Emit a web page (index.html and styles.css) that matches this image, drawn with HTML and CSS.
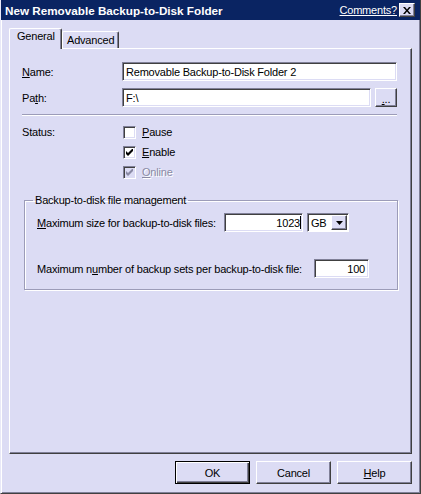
FILE: index.html
```html
<!doctype html>
<html>

<head>
    <meta charset="utf-8" />
    <link rel="stylesheet" href="styles.css">
</head>

<body>

    <div class="window">

        <div class="titlebar">
            <div class="title">New Removable Backup-to-Disk Folder</div>
            <span class="comments">Comments?</span>
            <span class="close">
                <svg width="8" height="7" viewBox="0 0 8 7">
                    <path d="M0 0h2l2 2.5 2-2.5h2l-3 3.5 3 3.5h-2l-2-2.5-2 2.5h-2l3-3.5z" fill="#000" />
                </svg>
            </span>
        </div>

        <div class="tabs">
            <div class="tab active">General</div>
            <div class="tab">Advanced</div>
        </div>

        <div class="panel">

            <div class="row">
                <div class="label"><u>N</u>ame:</div>
                <div class="field wide">Removable Backup-to-Disk Folder 2</div>
            </div>
            <div class="row">
                <div class="label">Pa<u>t</u>h:</div>
                <div class="field path">F:\</div>
                <div class="btn small"><u>.</u>..</div>
            </div>

            <div class="separator"></div>

            <div class="status">
                <div class="label">Status:</div>
                <div class="checks">
                    <div class="check-row">
                        <span class="box"></span>
                        <span><u>P</u>ause</span>
                    </div>
                    <div class="check-row">
                        <span class="box">
                            <svg width="7" height="7" viewBox="0 0 7 7">
                                <path d="M0 2v3l2 2 5-5v-3l-5 5z" fill="#000" />
                            </svg>
                        </span>
                        <span><u>E</u>nable</span>
                    </div>
                    <div class="check-row disabled">
                        <span class="box">
                            <svg width="7" height="7" viewBox="0 0 7 7">
                                <path d="M0 2v3l2 2 5-5v-3l-5 5z" fill="#8a8aa4" />
                            </svg>
                        </span>
                        <span><u>O</u>nline</span>
                    </div>
                </div>
            </div>

            <fieldset class="group">
                <legend>Backup-to-disk file management</legend>
                <div class="group-row">
                    <div class="glabel size-label"><u>M</u>aximum size for backup-to-disk files:</div>
                    <div class="field num size">1023<span class="caret"></span></div>
                    <div class="combo">
                        <span class="combo-text">GB</span>
                        <span class="combo-btn">
                            <svg width="7" height="4" viewBox="0 0 7 4">
                                <path d="M0 0h7l-3.5 4z" fill="#000" />
                            </svg>
                        </span>
                    </div>
                </div>
                <div class="group-row second">
                    <div class="glabel count-label">Maximum n<u>u</u>mber of backup sets per backup-to-disk file:</div>
                    <div class="field num count">100</div>
                </div>
            </fieldset>

        </div>

        <div class="buttons">
            <div class="btn default">OK</div>
            <div class="btn">Cancel</div>
            <div class="btn"><u>H</u>elp</div>
        </div>

    </div>

</body>

</html>
```

FILE: styles.css
```css
html,
body {
    margin: 0 0;
    font-family: "Liberation Sans", Arial, sans-serif;
    font-size: 11px;
    letter-spacing: -0.2px;
    color: #000;
}

.window {
    width: 421px;
    height: 494px;
    box-sizing: border-box;
    display: flex;
    flex-direction: column;
    background-color: #dcdcf4;
    border-left: 1px solid #e8e8f8;
    border-right: 1px solid #404040;
    border-bottom: 1px solid #404040;
    box-shadow: inset 1px 0 #ffffff, inset -1px -1px #808098;
}

.titlebar {
    height: 20px;
    display: flex;
    flex-direction: row;
    align-items: center;
    background-color: #0a2462;
    color: white;
    padding-left: 4px;
    padding-right: 5px;
}

.titlebar .title {
    flex-grow: 1;
    font-weight: bold;
    font-size: 11.7px;
    letter-spacing: 0;
}

.titlebar .comments {
    text-decoration: underline;
    margin-right: 2px;
}

.titlebar .close {
    width: 14px;
    height: 12px;
    display: flex;
    align-items: center;
    justify-content: center;
    background-color: #dcdcf4;
    border: 1px solid;
    border-color: #ffffff #404040 #404040 #ffffff;
    box-shadow: inset -1px -1px #808098;
}

.tabs {
    display: flex;
    flex-direction: row;
    align-items: flex-end;
    height: 21px;
    margin-top: 7px;
    padding-left: 8px;
    position: relative;
    z-index: 1;
}

.tab {
    height: 16px;
    padding: 0 4px;
    display: flex;
    align-items: center;
    border: 1px solid;
    border-bottom: none;
    border-color: #ffffff #404040 #404040 #ffffff;
    box-shadow: inset -1px 0 #808098;
    border-top-left-radius: 2px;
    border-top-right-radius: 2px;
}

.tab.active {
    padding: 1px 7px 0 7px;
    margin-bottom: -1px;
    background-color: #dcdcf4;
    align-items: flex-start;
    box-sizing: border-box;
    height: 21px;
    width: 53px;
}

.panel {
    margin-left: 8px;
    width: 403px;
    height: 406px;
    box-sizing: border-box;
    border: 1px solid;
    border-color: #ffffff #404040 #404040 #ffffff;
    box-shadow: inset -1px -1px #808098;
    padding: 13px 14px 0 12px;
}

.row {
    display: flex;
    flex-direction: row;
    align-items: center;
    height: 19px;
    margin-bottom: 7px;
}

.label {
    width: 100px;
}

.field {
    height: 19px;
    box-sizing: border-box;
    background-color: white;
    border: 1px solid;
    border-color: #808098 #ffffff #ffffff #808098;
    box-shadow: inset 1px 1px #404040, inset -1px -1px #dcdcf4;
    padding: 0 3px;
    display: flex;
    align-items: center;
    white-space: nowrap;
}

.field.wide {
    width: 275px;
}

.field.path {
    width: 249px;
}

.btn {
    height: 23px;
    width: 75px;
    box-sizing: border-box;
    display: flex;
    align-items: center;
    justify-content: center;
    border: 1px solid;
    border-color: #ffffff #404040 #404040 #ffffff;
    box-shadow: inset -1px -1px #808098;
}

.btn.small {
    width: 22px;
    height: 19px;
    margin-left: 4px;
    padding-top: 2px;
}

.separator {
    height: 0;
    margin-top: 5px;
    border-top: 1px solid #9c9cb8;
    border-bottom: 1px solid #ffffff;
    width: 375px;
}

.status {
    display: flex;
    flex-direction: row;
    margin-top: 6px;
}

.status .label {
    height: 20px;
    display: flex;
    align-items: center;
    width: 101px;
}

.check-row {
    height: 20px;
    display: flex;
    align-items: center;
}

.box {
    width: 13px;
    height: 13px;
    box-sizing: border-box;
    margin-right: 6px;
    background-color: white;
    border: 1px solid;
    border-color: #808098 #ffffff #ffffff #808098;
    box-shadow: inset 1px 1px #404040, inset -1px -1px #dcdcf4;
    display: flex;
    align-items: center;
    justify-content: center;
}

.check-row.disabled .box {
    background-color: #dcdcf4;
}

.check-row.disabled {
    color: #8a8aa4;
    text-shadow: 1px 1px #ffffff;
}

.group {
    margin: 12px 0 0 2px;
    padding: 0 12px 11px 12px;
    width: 374px;
    box-sizing: border-box;
    border: 1px solid #9c9cb8;
    box-shadow: 1px 1px #ffffff, inset 1px 1px #ffffff;
}

.group legend {
    padding: 0 2px;
    margin-left: -4px;
    line-height: 13px;
}

.group-row {
    display: flex;
    flex-direction: row;
    align-items: center;
    height: 19px;
    margin-top: 6px;
}

.group-row.second {
    margin-top: 27px;
}

.size-label {
    width: 187px;
}

.count-label {
    width: 277px;
}

.field.num {
    justify-content: flex-end;
}

.field.size {
    width: 79px;
    padding-right: 1px;
}

.caret {
    width: 1px;
    height: 13px;
    background-color: black;
    margin-left: 0;
}

.field.count {
    width: 55px;
    padding-right: 3px;
}

.combo {
    width: 42px;
    height: 19px;
    margin-left: 4px;
    box-sizing: border-box;
    background-color: white;
    border: 1px solid;
    border-color: #808098 #ffffff #ffffff #808098;
    box-shadow: inset 1px 1px #404040;
    display: flex;
    align-items: center;
    padding: 1px 1px 1px 3px;
}

.combo-text {
    flex-grow: 1;
}

.combo-btn {
    width: 16px;
    height: 15px;
    box-sizing: border-box;
    background-color: #dcdcf4;
    border: 1px solid;
    border-color: #ffffff #404040 #404040 #ffffff;
    box-shadow: inset -1px -1px #808098;
    display: flex;
    align-items: center;
    justify-content: center;
}

.buttons {
    display: flex;
    flex-direction: row;
    justify-content: flex-end;
    gap: 6px;
    margin-top: 7px;
    padding-right: 8px;
}

.btn.default {
    border: 1px solid #000000;
    box-shadow: inset 1px 1px #ffffff, inset -1px -1px #404040, inset -2px -2px #808098;
}
```
